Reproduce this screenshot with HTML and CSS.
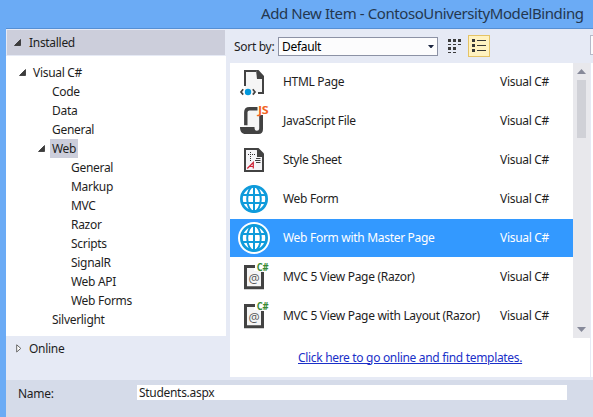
FILE: index.html
```html
<!DOCTYPE html>
<html lang="en">
<head>
<meta charset="utf-8">
<title>Add New Item</title>
<link rel="stylesheet" href="styles.css">
</head>
<body>
<svg width="0" height="0" class="defs">
  <defs>
    <symbol id="open" viewBox="0 0 7 7"><path d="M6.5.5v6H.5z" fill="#3c3c3c" stroke="#222" stroke-width=".7"/></symbol>
    <symbol id="globe" viewBox="0 0 28 28"><circle cx="14" cy="14" r="13" fill="#fff"/><g fill="none" stroke="currentColor" stroke-width="2"><path d="M14 1v26M2.500 10h23M2.500 18h23"/><ellipse cx="14" cy="14" rx="6.8" ry="12.7"/><circle cx="14" cy="14" r="12.600" stroke-width="2.800"/></g></symbol>
    <symbol id="view" viewBox="0 0 32 32"><path d="M5 5h9v5h9v17H5z" fill="#f5f5f5"/><path d="M15 5.500H5.500v21.200h17V11" fill="none" stroke="#424242" stroke-width="3"/><text x="14" y="21.500" text-anchor="middle" class="at">@</text><text x="16.700" y="9.600" class="cs" textLength="11.500" lengthAdjust="spacingAndGlyphs">C#</text></symbol>
  </defs>
</svg>
<div class="window">
  <header class="title"><span>Add New Item - ContosoUniversityModelBinding</span></header>
  <main class="body">
    <aside class="side">
      <div class="installed"><svg class="tri"><use href="#open"/></svg><span>Installed</span></div>
      <ul class="tree">
        <li class="l0"><svg class="tri"><use href="#open"/></svg><span>Visual C#</span></li>
        <li class="l1"><span>Code</span></li>
        <li class="l1"><span>Data</span></li>
        <li class="l1"><span>General</span></li>
        <li class="l1 parent"><svg class="tri"><use href="#open"/></svg><span class="picked">Web</span></li>
        <li class="l2"><span>General</span></li>
        <li class="l2"><span>Markup</span></li>
        <li class="l2"><span>MVC</span></li>
        <li class="l2"><span>Razor</span></li>
        <li class="l2"><span>Scripts</span></li>
        <li class="l2"><span>SignalR</span></li>
        <li class="l2"><span>Web API</span></li>
        <li class="l2"><span>Web Forms</span></li>
        <li class="l1"><span>Silverlight</span></li>
      </ul>
      <div class="online"><svg width="6" height="9" viewBox="0 0 6 9"><path d="M.7.800v7.200L4.800 4.400z" fill="#fff" stroke="#666" stroke-width="1"/></svg><span>Online</span></div>
    </aside>
    <section class="center">
      <div class="toolbar">
        <span class="sort">Sort by:</span>
        <div class="select"><span>Default</span><svg width="6" height="3" viewBox="0 0 6 3"><path d="M0 0h6L3.500 3h-1z" fill="#1b2540"/></svg></div>
        <svg class="grid" width="14" height="14" viewBox="0 0 14 14" fill="#3b3b3b"><path d="M0 0h3v3H0zM5 0h3v3H5zM10 0h3v3h-3zM0 8h3v3H0zM5 8h3v3H5zM0 5h3v1H0zM5 5h3v1H5zM10 5h3v1h-3zM0 13h3v1H0zM5 13h3v1H5z"/></svg>
        <div class="toggle"><svg width="14" height="14" viewBox="0 0 14 14" fill="#383838"><path d="M0 0h3v3H0zM0 5h3v3H0zM0 10h3v3H0zM5 1h9v1H5zM5 6h9v1H5zM5 11h9v1H5z"/></svg></div>
      </div>
      <div class="listbox">
        <div class="scroller">
          <ul class="items">
            <li><svg class="icon" viewBox="0 0 32 32"><path d="M5 5h11l7 7v15H5z" fill="#f5f5f5"/><path d="M5 20V5h11M23 11v16h-5" fill="none" stroke="#424242" stroke-width="2"/><path d="M16 4h2.500L24 10v3h-7z" fill="#424242"/><circle cx="8" cy="26" r="3.200" fill="#0097dc"/><path d="M3.200 23.300L1 26l2.200 2.600M12.800 23.300L15 26l-2.200 2.600" fill="none" stroke="#424242" stroke-width="1.700"/></svg><span class="name">HTML Page</span><span class="lang">Visual C#</span></li>
            <li><svg class="icon" viewBox="0 0 32 32"><path d="M6 4h12v6h3v16H6z" fill="#f5f5f5"/><path d="M17.500 3.700H9.500c-2.500 0-3.700 1.200-3.700 3.500v13" fill="none" stroke="#424242" stroke-width="3.400"/><path d="M19.200 10H23v14c0 3.500-1.500 5-4.500 5H5.500C2 29 0 26.500 0 22h14.500c0 2.800.8 3.800 2.300 3.800s2.400-.8 2.400-2.500z" fill="#424242"/><text x="18" y="9" class="js" textLength="10.300" lengthAdjust="spacingAndGlyphs">JS</text></svg><span class="name">JavaScript File</span><span class="lang">Visual C#</span></li>
            <li><svg class="icon" viewBox="0 0 32 32"><path d="M5 5h12l6 6v16H5z" fill="#f5f5f8" stroke="#424242" stroke-width="2"/><path d="M17 4h1.500L24 9.500V13h-7z" fill="#424242"/><path d="M8 10.500h8M10.500 8v9" stroke="#333" stroke-width="1" stroke-dasharray="1 1"/><path d="M16 14.500h4.500M15 16.500h5.500M16 18.500h4.500" stroke="#424242"/><path d="M7.300 24.500l6-6v6M9.500 22.500h4" stroke="#cf2437" stroke-width="1.200" fill="none"/></svg><span class="name">Style Sheet</span><span class="lang">Visual C#</span></li>
            <li><svg class="globe"><use href="#globe"/></svg><span class="name">Web Form</span><span class="lang">Visual C#</span></li>
            <li class="selected"><svg class="globe halo" viewBox="0 0 32 32"><use href="#globe" x="2" y="2" width="28" height="28"/></svg><span class="name">Web Form with Master Page</span><span class="lang">Visual C#</span></li>
            <li><svg class="icon"><use href="#view"/></svg><span class="name">MVC 5 View Page (Razor)</span><span class="lang">Visual C#</span></li>
            <li><svg class="icon"><use href="#view"/></svg><span class="name">MVC 5 View Page with Layout (Razor)</span><span class="lang">Visual C#</span></li>
          </ul>
          <div class="scrollbar"><svg width="9" height="5" viewBox="0 0 9 5"><path d="M0 5l4.500-5L9 5z" fill="#868999"/></svg><div class="thumb"></div><svg class="down" width="9" height="5" viewBox="0 0 9 5"><path d="M0 0l4.500 5L9 0z" fill="#868999"/></svg></div>
        </div>
        <div class="more"><a href="#">Click here to go online and find templates.</a></div>
      </div>
    </section>
    <div class="details"><div class="search"></div><div class="info"></div></div>
  </main>
  <footer class="footer"><label>Name:</label><div class="field"><span>Students.aspx</span></div></footer>
</div>
</body>
</html>
```

FILE: styles.css
```css
* { box-sizing: border-box; }
body { margin: 0; width: 593px; height: 417px; overflow: hidden; font: 12px/18px "Noto Sans", "Open Sans", sans-serif; letter-spacing: -0.3px; color: #1e1e1e; }
ul { margin: 0; padding: 0; list-style: none; }
svg { display: block; flex: none; }
span, a, label { white-space: nowrap; }
.defs { position: absolute; }
.window { height: 417px; background: #6babf5; padding-left: 6px; display: flex; flex-direction: column; }
.title { height: 28px; flex: none; padding: 1px 0 0 255px; font-size: 15px; line-height: 24px; letter-spacing: -0.41px; color: #24374f; }
.body { height: 352px; flex: none; display: flex; background: #e6eaf5; border-top: 1px solid #568fd3; }
.side { width: 220px; border-left: 1px solid #e6eaf5; margin-top: 1px; }
.tri { width: 7px; height: 7px; }
.installed { width: 218px; height: 25px; background: #cccedb; display: flex; align-items: center; padding-left: 7px; gap: 8px; }
.tree { height: 280px; margin: 1px 0 0 -1px; padding-top: 7px; background: #fff; }
.tree li { height: 19px; display: flex; align-items: center; line-height: 20px; }
.l0 { padding-left: 13px; gap: 7px; }
.l1 { padding-left: 46px; }
.l2 { padding-left: 65px; }
.tree .parent { padding-left: 32px; gap: 5px; }
.picked { background: #cccedb; width: 28px; padding-left: 2px; height: 19px; }
.online { height: 25px; display: flex; align-items: center; padding-left: 9px; gap: 7px; }
.center { width: 360px; margin-left: 4px; }
.toolbar { height: 34px; display: flex; align-items: flex-start; }
.sort { width: 48px; padding: 9px 0 0 4px; }
.select { width: 160px; height: 19px; margin-top: 8px; border: 1px solid #8c92a5; background: #fcfcfd; display: flex; align-items: center; justify-content: space-between; padding: 0 3px; color: #000; }
.grid { margin: 10px 0 0 10px; }
.toggle { width: 22px; height: 22px; margin: 6px 0 0 6px; border: 1px solid #e5c365; background: #fff2c0; padding: 3px 0 0 3px; }
.listbox { height: 314px; background: #fff; }
.scroller { height: 275px; display: flex; overflow: hidden; }
.items { width: 343px; }
.items li { height: 38px; margin-bottom: 1px; display: flex; align-items: center; }
.items .selected { background: #3399ff; color: #fff; }
.icon { width: 32px; height: 32px; margin: 0 11px 0 10px; overflow: visible; }
.globe { width: 28px; height: 28px; margin: 0 15px 0 10px; color: #0f9bdb; }
.halo { width: 32px; height: 32px; margin: 0 13px 0 8px; border-radius: 50%; background: #fff; }
.name { width: 217px; }
.cs { font: bold 10.5px "Open Sans", sans-serif; fill: #388a34; }
.js { font: bold 10px "Open Sans", sans-serif; fill: #f16424; }
.at { font: 12.5px "Open Sans", sans-serif; fill: #5a5a5a; }
.scrollbar { width: 17px; background: #e8e8ec; display: flex; flex-direction: column; align-items: center; padding: 6px 0; }
.thumb { width: 9px; height: 58px; margin-top: 6px; background: #d0d1d7; }
.down { margin-top: auto; }
.more { height: 39px; display: flex; align-items: center; padding-left: 68px; }
.more a { color: #1a30c8; text-decoration: underline; letter-spacing: -0.32px; }
.details { flex: 1; }
.search { height: 20px; margin: 6px 0 8px; border: 1px solid #b5b9c9; border-right: 0; background: #fcfcfd; }
.info { height: 314px; margin-left: 1px; background: #fff; }
.footer { flex: 1; background: #d5dbe9; display: flex; padding: 5px 0 0 12px; }
.footer label { width: 119px; line-height: 17px; }
.field { width: 430px; height: 15px; background: #fff; padding-left: 2px; line-height: 16px; }
```
